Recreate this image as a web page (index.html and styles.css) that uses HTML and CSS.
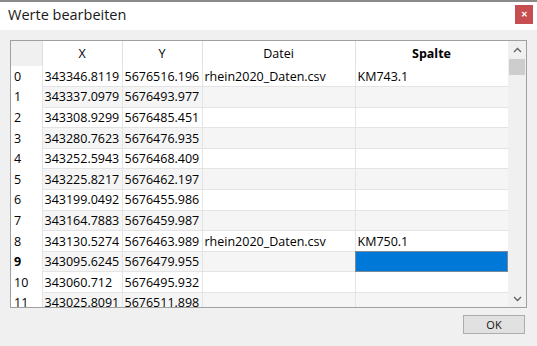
FILE: index.html
```html
<!DOCTYPE html>
<html>
<head>
    <title>Werte bearbeiten</title>
    <meta name="viewport" content="width=device-width, initial-scale=1">
    <link rel="stylesheet" href="styles.css">
</head>

<body>
    <div class="window">
        <div class="titlebar">
            <span class="title">Werte bearbeiten</span>
            <button type="button" class="close">&#x2715;</button>
        </div>

        <div class="content">
            <div class="grid-frame">
                <div class="grid-view">
                    <table class="grid">
                        <colgroup>
                            <col class="col-head">
                            <col class="col-num">
                            <col class="col-num">
                            <col class="col-text">
                            <col class="col-text">
                        </colgroup>
                        <thead>
                            <tr>
                                <th class="corner"></th>
                                <th>X</th>
                                <th>Y</th>
                                <th>Datei</th>
                                <th class="bold">Spalte</th>
                            </tr>
                        </thead>
                        <tbody>
                            <tr><th>0</th><td>343346.8119</td><td>5676516.196</td><td>rhein2020_Daten.csv</td><td>KM743.1</td></tr>
                            <tr class="alt"><th>1</th><td>343337.0979</td><td>5676493.977</td><td></td><td></td></tr>
                            <tr><th>2</th><td>343308.9299</td><td>5676485.451</td><td></td><td></td></tr>
                            <tr class="alt"><th>3</th><td>343280.7623</td><td>5676476.935</td><td></td><td></td></tr>
                            <tr><th>4</th><td>343252.5943</td><td>5676468.409</td><td></td><td></td></tr>
                            <tr class="alt"><th>5</th><td>343225.8217</td><td>5676462.197</td><td></td><td></td></tr>
                            <tr><th>6</th><td>343199.0492</td><td>5676455.986</td><td></td><td></td></tr>
                            <tr class="alt"><th>7</th><td>343164.7883</td><td>5676459.987</td><td></td><td></td></tr>
                            <tr><th>8</th><td>343130.5274</td><td>5676463.989</td><td>rhein2020_Daten.csv</td><td>KM750.1</td></tr>
                            <tr class="alt current"><th>9</th><td>343095.6245</td><td>5676479.955</td><td></td><td class="selected"></td></tr>
                            <tr><th>10</th><td>343060.712</td><td>5676495.932</td><td></td><td></td></tr>
                            <tr class="alt"><th>11</th><td>343025.8091</td><td>5676511.898</td><td></td><td></td></tr>
                        </tbody>
                    </table>
                </div>

                <div class="scrollbar">
                    <div class="arrow">
                        <svg width="9" height="6" viewBox="0 0 9 6"><path d="M1 5 L4.5 1.5 L8 5" fill="none" stroke="#606060" stroke-width="1.3"/></svg>
                    </div>
                    <div class="track">
                        <div class="thumb"></div>
                    </div>
                    <div class="arrow">
                        <svg width="9" height="6" viewBox="0 0 9 6"><path d="M1 1 L4.5 4.5 L8 1" fill="none" stroke="#606060" stroke-width="1.3"/></svg>
                    </div>
                </div>
            </div>

            <div class="buttons">
                <button type="button" class="ok">OK</button>
            </div>
        </div>
    </div>
</body>
</html>
```

FILE: styles.css
```css
html, body {
    margin: 0;
    padding: 0;
    background-color: #f0f0f0;
    font-family: 'Open Sans', 'Noto Sans', sans-serif;
    color: #000;
}

.window {
    width: 537px;
    height: 346px;
    overflow: hidden;
}

.titlebar {
    height: 28px;
    border-top: 2px solid #8a8a8a;
    background: white;
    display: flex;
    align-items: center;
    justify-content: space-between;
    padding: 0 4px 0 8px;
}

.title {
    font-size: 14.5px;
    color: #1a1a1a;
    margin-top: -3px;
}

.close {
    width: 18px;
    height: 19px;
    padding: 0;
    border: none;
    background-color: #c74e50;
    color: white;
    font-size: 8px;
    font-weight: bold;
    line-height: 19px;
    margin-top: -3px;
}

.content {
    padding: 10px 10px 0 10px;
}

.grid-frame {
    height: 266px;
    border: 1px solid #a0a0a0;
    background: white;
    display: flex;
}

.grid-view {
    width: 497px;
    overflow: hidden;
}

.grid {
    border-collapse: collapse;
    table-layout: fixed;
    width: 497px;
    font-size: 12.5px;
}

.col-head {
    width: 31px;
}

.col-num {
    width: 80px;
}

.col-text {
    width: 153px;
}

.grid thead th {
    height: 25px;
    padding: 0;
    font-weight: normal;
    text-align: center;
    border-right: 1px solid #e0e0e0;
}

.grid thead th.bold {
    font-weight: bold;
}

.grid thead th.corner {
    background-color: #f0f0f0;
}

.grid tbody tr {
    height: 20.6px;
}

.grid tbody th {
    font-weight: normal;
    text-align: left;
    padding: 0 0 0 3px;
    border-right: 1px solid #e4e4e4;
    background: white;
}

.grid tbody tr.current th {
    font-weight: bold;
}

.grid td {
    padding: 0 0 0 2px;
    white-space: nowrap;
    overflow: hidden;
    border-right: 1px solid #e4e4e4;
    border-bottom: 1px solid #e4e4e4;
}

.grid tr.alt td {
    background-color: #f5f5f5;
}

.grid tr.alt td.selected {
    background-color: #0078d7;
    outline: 1px solid #7a8a99;
    outline-offset: -1px;
}

.scrollbar {
    width: 18px;
    background-color: #f0f0f0;
    display: flex;
    flex-direction: column;
}

.arrow {
    height: 17px;
    display: flex;
    align-items: center;
    justify-content: center;
}

.track {
    flex: 1;
    padding: 0 1px;
}

.thumb {
    height: 16px;
    margin-top: 1px;
    background-color: #cdcdcd;
}

.buttons {
    display: flex;
    justify-content: flex-end;
    padding-top: 7px;
    padding-right: 2px;
}

.ok {
    width: 62px;
    height: 19px;
    padding: 0;
    background-color: #e1e1e1;
    border: 1px solid #adadad;
    font-family: 'Open Sans', 'Noto Sans', sans-serif;
    font-size: 11px;
    color: #111;
}
```
